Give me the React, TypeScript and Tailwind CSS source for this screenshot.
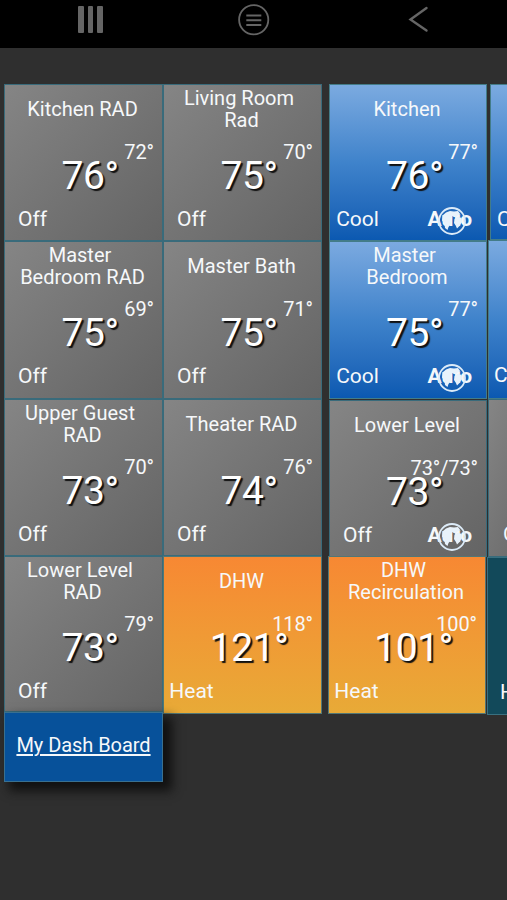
import React from 'react';

type Kind = 'off' | 'cool' | 'heat' | 'teal';

interface Zone {
  name: string[];
  temp: string;
  setpoint: string;
  mode: string;
  kind: Kind;
  fan?: boolean;
  box: string;
  modeBox?: string;
}

const kindStyles: Record<Kind, string> = {
  off: 'bg-linear-to-br from-[#858585] to-[#646464] border-[#396b7b]',
  cool: 'bg-linear-to-b from-[#7baae0] via-[#3f83cb] to-[#0b59b1] border-[#437c88]',
  heat: 'bg-linear-to-b from-[#f78833] to-[#e8aa37] border-[#527776]',
  teal: 'bg-[#12495a] border-[#397080]',
};

const radiators: Zone[] = [
  { name: ['Kitchen RAD'], temp: '76°', setpoint: '72°', mode: 'Off', kind: 'off', box: 'h-[157px]' },
  { name: ['Master', 'Bedroom RAD'], temp: '75°', setpoint: '69°', mode: 'Off', kind: 'off', box: 'h-[158px]' },
  { name: ['Upper Guest', 'RAD'], temp: '73°', setpoint: '70°', mode: 'Off', kind: 'off', box: 'h-[157px]' },
  { name: ['Lower Level', 'RAD'], temp: '73°', setpoint: '79°', mode: 'Off', kind: 'off', box: 'h-[156px]' },
];

const rooms: Zone[] = [
  { name: ['Living Room', 'Rad'], temp: '75°', setpoint: '70°', mode: 'Off', kind: 'off', box: 'h-[157px]' },
  { name: ['Master Bath'], temp: '75°', setpoint: '71°', mode: 'Off', kind: 'off', box: 'h-[158px]' },
  { name: ['Theater RAD'], temp: '74°', setpoint: '76°', mode: 'Off', kind: 'off', box: 'h-[157px]' },
  { name: ['DHW'], temp: '121°', setpoint: '118°', mode: 'Heat', kind: 'heat', box: 'h-[158px]' },
];

const hvac: Zone[] = [
  { name: ['Kitchen'], temp: '76°', setpoint: '77°', mode: 'Cool', kind: 'cool', fan: true, box: 'ml-px h-[157px]' },
  { name: ['Master', 'Bedroom'], temp: '75°', setpoint: '77°', mode: 'Cool', kind: 'cool', fan: true, box: 'ml-px h-[158px]' },
  { name: ['Lower Level'], temp: '73°', setpoint: '73°/73°', mode: 'Off', kind: 'off', fan: true, box: 'ml-px mt-px h-[157px]' },
  { name: ['DHW', 'Recirculation'], temp: '101°', setpoint: '100°', mode: 'Heat', kind: 'heat', box: '-mt-px mr-px h-[158px]' },
];

// Last column runs off the right side of the screen
const overflow: Zone[] = [
  { name: [], temp: '', setpoint: '', mode: 'Cool', kind: 'cool', box: 'ml-[3px] h-[156px]', modeBox: 'pl-1.5' },
  { name: [], temp: '', setpoint: '', mode: 'Cool', kind: 'cool', box: 'ml-px h-[159px]', modeBox: 'pl-[5px]' },
  { name: [], temp: '', setpoint: '', mode: 'Off', kind: 'off', box: 'ml-px h-[158px]', modeBox: 'pl-3.5' },
  { name: [], temp: '', setpoint: '', mode: 'Heat', kind: 'teal', box: 'h-[158px]', modeBox: 'pl-3' },
];

const GlobeIcon = () => (
  <svg className="absolute -top-px left-[9px]" width="30" height="30" viewBox="0 0 30 30">
    <circle cx="15" cy="15" r="13" fill="none" stroke="#dcebf8" strokeWidth="1.8" />
    <path
      d="M5.500 9.500 9 6.500 13 5l4 .5 4-.5 2.500 3.500-3 1-1.500 2-3.500-1.500-2 2.500 1 2.500-1 3.500-2 2.500-1 3-2.500-2-.5-4-2.500-3.500z"
      fill="#e8f2fb"
    />
    <path d="m17.500 13 4-2.500 3 1.500.5 4-2.500 4-2.500 2.500-1.500-3.500-1.500-2z" fill="#e8f2fb" />
  </svg>
);

const ZoneTile = ({ zone }: { zone: Zone }) => (
  <div className={`shrink-0 overflow-hidden border text-[#f6f8fa] ${kindStyles[zone.kind]} ${zone.box}`}>
    <div className="flex h-[48px] flex-col items-center justify-center pr-[2px] text-center text-[20px] leading-[22px] whitespace-nowrap">
      {zone.name.map((line, i) => (
        <span key={line} className={i < zone.name.length - 1 ? 'pr-[5px]' : ''}>
          {line}
        </span>
      ))}
    </div>
    <div className="mt-[7px] h-6 pr-[8px] text-right text-[20px] leading-6 tracking-[-0.1px]">{zone.setpoint}</div>
    <div className="-mt-[9px] h-[42px] pl-[13px] text-center text-[39px] leading-[42px] tracking-[-0.4px] text-white [text-shadow:2px_2px_1px_#111]">
      {zone.temp}
    </div>
    <div className="mt-[10px] flex h-6 justify-between text-[21px] leading-6">
      <span className={zone.modeBox ?? 'w-[55px] text-center'}>{zone.mode}</span>
      {zone.fan && (
        <div className="relative mr-[14px] text-[21px] font-bold">
          Auto
          <GlobeIcon />
        </div>
      )}
    </div>
  </div>
);

const NavBar = () => (
  <div className="flex h-12 shrink-0 bg-black text-[#656565]">
    <div className="flex w-[181px] gap-1 pt-[6px] pl-[78px]">
      <span className="h-[27px] w-[5.500px] rounded-[1px] bg-[#656565]" />
      <span className="h-[27px] w-[5.500px] rounded-[1px] bg-[#656565]" />
      <span className="h-[27px] w-[5.500px] rounded-[1px] bg-[#656565]" />
    </div>
    <div className="flex w-[145px] justify-center pt-1">
      <svg width="32" height="32" viewBox="0 0 32 32" fill="none" stroke="currentColor">
        <circle cx="15.700" cy="15.700" r="14.600" strokeWidth="1.800" />
        <path d="M8.300 11.500h15M8.300 16.200h15M8.300 21h15" strokeWidth="2" />
      </svg>
    </div>
    <div className="flex w-[181px] pt-[6px] pl-[82px]">
      <svg width="22" height="28" viewBox="0 0 22 28" fill="none" stroke="currentColor">
        <path d="M18.500 2 2.500 13.500 18.500 24.500" strokeWidth="2.400" strokeLinecap="round" />
      </svg>
    </div>
  </div>
);

export default function App() {
  return (
    <div className="flex h-[900px] w-[507px] flex-col overflow-hidden bg-[#2f2f2f] font-[Roboto,sans-serif]">
      <NavBar />
      <div className="mt-[36px] flex pl-1">
        <div className="flex w-[159px] flex-col">
          {radiators.map((zone, i) => (
            <ZoneTile key={i} zone={zone} />
          ))}
          <a className="relative flex h-[70px] items-center justify-center border border-[#397090] bg-[#07519a] pb-[4px] text-[20px] tracking-[-0.05px] text-[#f6f8fa] underline decoration-[1.5px] underline-offset-[2px] shadow-[7px_7px_10px_2px_#111]">
            My Dash Board
          </a>
        </div>
        <div className="flex w-[159px] flex-col">
          {rooms.map((zone, i) => (
            <ZoneTile key={i} zone={zone} />
          ))}
        </div>
        <div className="ml-[6px] flex w-[159px] flex-col">
          {hvac.map((zone, i) => (
            <ZoneTile key={i} zone={zone} />
          ))}
        </div>
        <div className="-mr-10 flex w-[60px] shrink-0 flex-col">
          {overflow.map((zone, i) => (
            <ZoneTile key={i} zone={zone} />
          ))}
        </div>
      </div>
    </div>
  );
}
